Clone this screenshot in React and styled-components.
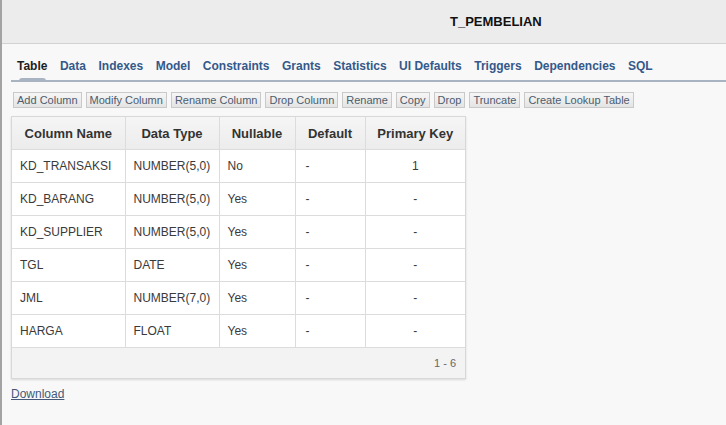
import React from "react";
import styled, { createGlobalStyle } from "styled-components";

const Global = createGlobalStyle`
  html, body { margin: 0; padding: 0; background: #f8f8f8; }
  body { font-family: "Liberation Sans", Arial, sans-serif; }
`;

const Page = styled.div`
  min-height: 425px;
  border-left: 2px solid #a3a3a3;
  background: #f8f8f8;
  box-sizing: border-box;
`;

const Header = styled.header`
  height: 43px;
  background: #ececec;
  border-bottom: 1px solid #d2d2d2;
  display: flex;
  align-items: center;
  padding-left: 448px;
  box-sizing: content-box;
`;

const Title = styled.h1`
  margin: 0;
  font-size: 13px;
  font-weight: bold;
  color: #111;
`;

const TabBar = styled.nav`
  margin: 13px 0 0 9px;
  border-bottom: 2px solid #a9b4c3;
  display: flex;
  gap: 12.5px;
  padding: 0 0 4px 6px;
`;

const Tab = styled.span`
  position: relative;
  font-size: 12px;
  font-weight: bold;
  line-height: 19px;
  color: ${(p) => (p.$active ? "#1e1e1e" : "#34598a")};
  &::after {
    content: "";
    display: ${(p) => (p.$active ? "block" : "none")};
    position: absolute;
    left: 2px;
    bottom: -6px;
    width: 27px;
    height: 4px;
    background: #a9b4c3;
    border-radius: 3px 3px 0 0;
  }
`;

const Toolbar = styled.div`
  display: flex;
  gap: 4px;
  margin: 10px 0 0 11px;
`;

const Button = styled.button`
  font-family: "Liberation Sans", Arial, sans-serif;
  font-size: 11px;
  line-height: 14px;
  height: 16px;
  padding: 0 3px;
  color: #4d5c6e;
  background: linear-gradient(#f6f6f6, #e4e4e4);
  border: 1px solid #c9c9c9;
  border-radius: 0;
  cursor: pointer;
`;

const Card = styled.div`
  margin: 8px 0 0 9px;
  width: 453px;
  border: 1px solid #d8d8d8;
  box-shadow: 0 1px 2px rgba(0, 0, 0, 0.12);
  background: #fff;
`;

const Grid = styled.table`
  border-collapse: collapse;
  width: 100%;
  table-layout: fixed;
`;

const Th = styled.th`
  height: 32px;
  padding: 0;
  font-size: 13px;
  font-weight: bold;
  color: #333;
  background: linear-gradient(#f5f5f5, #ececec);
  border-right: 1px solid #dcdcdc;
  border-bottom: 1px solid #dcdcdc;
  text-align: center;
  &:last-child { border-right: none; }
`;

const Td = styled.td`
  height: 32px;
  padding: 0 ${(p) => (p.$center ? "0" : p.$dash ? "10px" : "8px")};
  font-size: 12px;
  color: #3a3a3a;
  border-right: 1px solid #dcdcdc;
  border-bottom: 1px solid #dcdcdc;
  text-align: ${(p) => (p.$center ? "center" : "left")};
  &:last-child { border-right: none; }
`;

const Footer = styled.div`
  height: 30px;
  background: #f3f3f3;
  display: flex;
  align-items: center;
  justify-content: flex-end;
  padding-right: 9px;
  font-size: 11px;
  color: #666;
`;

const DownloadLink = styled.a`
  display: inline-block;
  margin: 8px 0 0 9px;
  font-size: 12px;
  color: #44587a;
  text-decoration: underline;
`;

const columns = [
  { name: "Column Name", width: 113 },
  { name: "Data Type", width: 94 },
  { name: "Nullable", width: 76 },
  { name: "Default", width: 70 },
  { name: "Primary Key", width: 100 },
];

const rows = [
  ["KD_TRANSAKSI", "NUMBER(5,0)", "No", "-", "1"],
  ["KD_BARANG", "NUMBER(5,0)", "Yes", "-", "-"],
  ["KD_SUPPLIER", "NUMBER(5,0)", "Yes", "-", "-"],
  ["TGL", "DATE", "Yes", "-", "-"],
  ["JML", "NUMBER(7,0)", "Yes", "-", "-"],
  ["HARGA", "FLOAT", "Yes", "-", "-"],
];

const tabs = [
  "Table",
  "Data",
  "Indexes",
  "Model",
  "Constraints",
  "Grants",
  "Statistics",
  "UI Defaults",
  "Triggers",
  "Dependencies",
  "SQL",
];

const actions = [
  "Add Column",
  "Modify Column",
  "Rename Column",
  "Drop Column",
  "Rename",
  "Copy",
  "Drop",
  "Truncate",
  "Create Lookup Table",
];

export default function App() {
  return (
    <>
      <Global />
      <Page>
        <Header>
          <Title>T_PEMBELIAN</Title>
        </Header>
        <TabBar>
          {tabs.map((t, i) => (
            <Tab key={t} $active={i === 0}>
              {t}
            </Tab>
          ))}
        </TabBar>
        <Toolbar>
          {actions.map((a) => (
            <Button key={a}>{a}</Button>
          ))}
        </Toolbar>
        <Card>
          <Grid>
            <colgroup>
              {columns.map((c) => (
                <col key={c.name} style={{ width: c.width }} />
              ))}
            </colgroup>
            <thead>
              <tr>
                {columns.map((c) => (
                  <Th key={c.name}>{c.name}</Th>
                ))}
              </tr>
            </thead>
            <tbody>
              {rows.map((r) => (
                <tr key={r[0]}>
                  <Td>{r[0]}</Td>
                  <Td>{r[1]}</Td>
                  <Td>{r[2]}</Td>
                  <Td $dash>{r[3]}</Td>
                  <Td $center>{r[4]}</Td>
                </tr>
              ))}
            </tbody>
          </Grid>
          <Footer>1 - 6</Footer>
        </Card>
        <DownloadLink href="#">Download</DownloadLink>
      </Page>
    </>
  );
}
